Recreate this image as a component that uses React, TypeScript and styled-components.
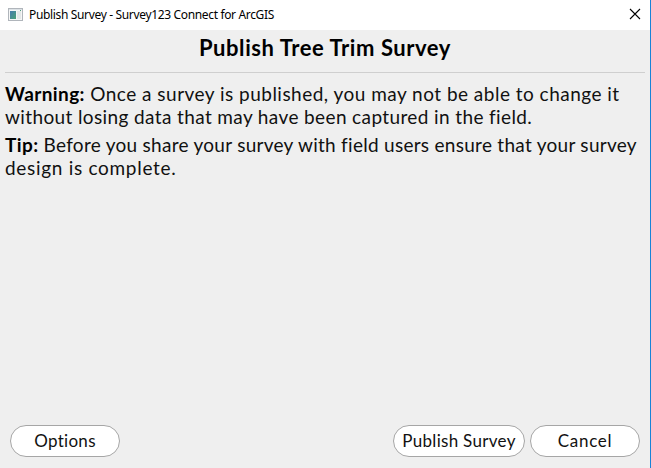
import React from "react";
import styled, { createGlobalStyle } from "styled-components";

const GlobalStyle = createGlobalStyle`
  * { box-sizing: border-box; }
  html, body { margin: 0; overflow: hidden; background: #efefef; }
`;

const Window = styled.main`
  display: flex;
  flex-direction: column;
  width: 651px;
  height: 468px;
  border-right: 1px solid #1883d7;
  background: #efefef;
  color: #111;
  font-family: Lato, sans-serif;
`;

const TitleBar = styled.header`
  display: flex;
  align-items: center;
  flex: none;
  height: 30px;
  padding: 0 9px 0 8px;
  background: #fff;
`;

const AppIcon = styled.svg`
  width: 15px;
  height: 13px;
  margin: 0 6px 2px 0;
`;

const Caption = styled.span`
  flex: 1;
  color: #000;
  font: 12px/16px "Noto Sans", sans-serif;
  letter-spacing: -0.343px;
  white-space: nowrap;
`;

const CloseButton = styled.button`
  display: flex;
  padding: 0;
  margin-bottom: 2px;
  border: 0;
  background: none;
`;

const Heading = styled.h1`
  flex: none;
  height: 43px;
  margin: 0 5px;
  padding-top: 4px;
  border-bottom: 1px solid #cfcfcf;
  color: #000;
  font-size: 22px;
  font-weight: 700;
  line-height: 27px;
  letter-spacing: 0.56px;
  text-align: center;
`;

const Messages = styled.section`
  display: flex;
  flex: 1;
  flex-direction: column;
  gap: 5px;
  padding: 9px 5px 0;
`;

const Message = styled.p`
  margin: 0;
  font-size: 19px;
  line-height: 23px;
`;

const Line = styled.span<{ $tracking: number }>`
  display: block;
  white-space: nowrap;
  letter-spacing: ${({ $tracking }) => $tracking}px;
`;

const Label = styled.strong`
  color: #000;
  font-weight: 700;
  letter-spacing: 0.4px;
`;

const Footer = styled.footer`
  display: flex;
  flex: none;
  gap: 5px;
  padding: 0 10px 11px;
`;

const PillButton = styled.button<{ $width: number; $tracking: number; $start?: boolean }>`
  width: ${({ $width }) => $width}px;
  height: 32px;
  margin-right: ${({ $start }) => ($start ? "auto" : "0")};
  padding: 0;
  border: 1px solid #a6a6a6;
  border-radius: 16px;
  background: #fff;
  color: #111;
  font: 17px/30px Lato, sans-serif;
  letter-spacing: ${({ $tracking }) => $tracking}px;
  white-space: nowrap;
`;

export default function App() {
  return (
    <>
      <GlobalStyle />
      <Window>
        <TitleBar>
          <AppIcon viewBox="0 0 15 13" aria-hidden="true">
            <defs>
              <linearGradient id="pane" x1="0" y1="0" x2="1" y2="1">
                <stop offset="0" stopColor="#477cae" />
                <stop offset="1" stopColor="#4aa276" />
              </linearGradient>
            </defs>
            <rect x="0.5" y="0.5" width="14" height="12" fill="#f5f6f6" stroke="#b0b5bb" />
            <path d="M1 1.5h13" stroke="#dce2e6" />
            <rect x="2" y="3" width="6" height="8" fill="url(#pane)" />
            <rect x="9" y="3" width="4" height="8" fill="#e4e8e8" />
            <path d="M12 2.5h1" stroke="#4c9d7c" />
          </AppIcon>
          <Caption>Publish Survey - Survey123 Connect for ArcGIS</Caption>
          <CloseButton aria-label="Close">
            <svg width="12" height="12" viewBox="0 0 12 12">
              <path d="M1 1L11 11M11 1L1 11" stroke="#000" strokeWidth="1.1" />
            </svg>
          </CloseButton>
        </TitleBar>
        <Heading>Publish Tree Trim Survey</Heading>
        <Messages>
          <Message>
            <Line $tracking={0.48}>
              <Label>Warning:</Label> Once a survey is published, you may not be able to change it
            </Line>
            <Line $tracking={0.38}>without losing data that may have been captured in the field.</Line>
          </Message>
          <Message>
            <Line $tracking={0.28}>
              <Label>Tip:</Label> Before you share your survey with field users ensure that your survey
            </Line>
            <Line $tracking={0.7}>design is complete.</Line>
          </Message>
        </Messages>
        <Footer>
          <PillButton $width={110} $tracking={0.3} $start>Options</PillButton>
          <PillButton $width={132} $tracking={0.3}>Publish Survey</PillButton>
          <PillButton $width={110} $tracking={0.7}>Cancel</PillButton>
        </Footer>
      </Window>
    </>
  );
}
